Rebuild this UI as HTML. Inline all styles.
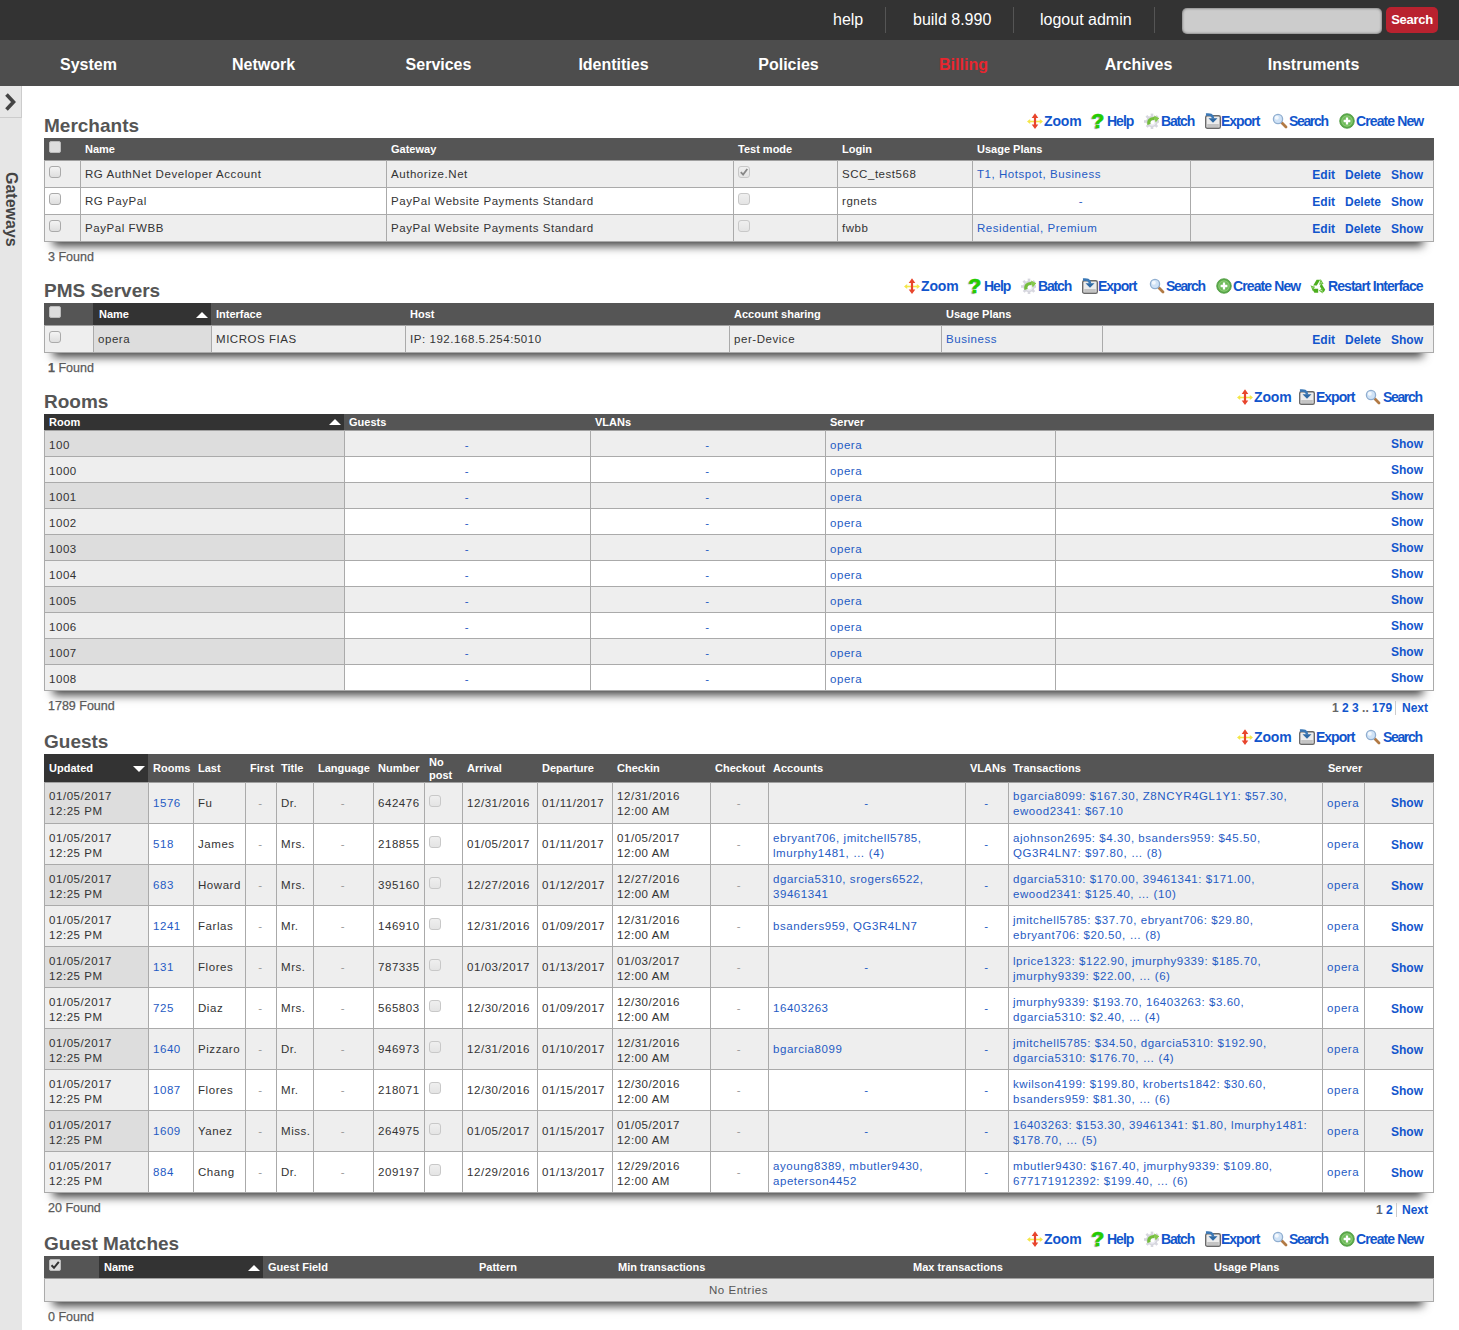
<!DOCTYPE html><html><head><meta charset="utf-8"><title>Billing</title><style>
*{box-sizing:border-box}
html,body{margin:0;padding:0}
body{width:1459px;height:1330px;overflow:hidden;position:relative;background:#fff;font-family:"Liberation Sans",sans-serif;color:#333}
.a{position:absolute}
.nw{white-space:nowrap}
#top{left:0;top:0;width:1459px;height:40px;background:#333}
#top .t{color:#fff;font-size:16px;top:10px;line-height:20px}
#top .sep{top:7px;width:1px;height:26px;background:#555}
#srch{left:1182px;top:8px;width:200px;height:26px;background:#ccc;border-radius:5px;box-shadow:inset 0 0 3px rgba(0,0,0,.6)}
#sbtn{left:1386px;top:7px;width:52px;height:26px;background:#b9222f;border-radius:5px;color:#fff;font-weight:bold;font-size:13px;line-height:26px;text-align:center;letter-spacing:-0.3px}
#nav{left:0;top:40px;width:1459px;height:46px;background:#4d4d4d}
#nav div{position:absolute;top:2px;width:175px;height:46px;line-height:46px;text-align:center;color:#fff;font-weight:bold;font-size:16px}
#side{left:0;top:86px;width:22px;height:1244px;background:#e6e6e6}
#chev{left:0;top:86px;width:22px;height:32px;border-right:1px solid #ccc;border-bottom:1px solid #ccc;background:#e6e6e6}
.h2{left:44px;font-size:19px;font-weight:bold;color:#555;line-height:22px;white-space:nowrap;margin-top:1px}
.tbt{color:#1155cc;font-weight:bold;font-size:14px;letter-spacing:-0.8px;line-height:16px;white-space:nowrap}
.a svg{display:block}
.helpq{width:16px;height:16px;font-size:21px;font-weight:bold;color:#22cc00;line-height:16px;text-align:center;-webkit-text-stroke:0.7px #22cc00;text-shadow:-1.5px 1px 1px rgba(0,0,0,.4)}
.tbl{left:44px;width:1390px}
.shd{position:absolute;left:51px;width:1374px;box-shadow:0 6px 9px -2px rgba(0,0,0,.75);background:#888}
.hd{position:absolute;top:0;left:0;width:1390px;background:#555}
.hc{position:absolute;color:#fff;font-weight:bold;font-size:11px;white-space:nowrap;line-height:13px}
.srt{background:#333}
.cell{position:absolute;overflow:hidden;font-size:11.5px;letter-spacing:0.55px;color:#333;white-space:nowrap;display:flex;align-items:center;line-height:15px;padding-top:0px}
.vl{position:absolute;width:1px;background:#aaa}
.hl{position:absolute;height:1px;background:#aaa;left:0;width:1390px}
.lk{color:#1f5bc4}
.gr{color:#999}
.act{color:#1155cc;font-weight:bold;font-size:12px;letter-spacing:0}
.found{left:48px;font-size:12.5px;color:#5a5a5a;line-height:14px;white-space:nowrap;-webkit-text-stroke:0.25px #5a5a5a}
.cb{position:absolute;width:12px;height:12px;border:1px solid #aaa;border-radius:3px;background:linear-gradient(#f4f4f4,#dedede)}
.dis{border-color:#c8c8c8;background:linear-gradient(#efefef,#e4e4e4)}
.cbh{position:absolute;width:12px;height:12px;border:1px solid #bbb;border-radius:2px;background:#ddd}
.tri{position:absolute;width:0;height:0;border-left:6px solid transparent;border-right:6px solid transparent}
.pg{position:absolute;font-size:12px;font-weight:bold;white-space:nowrap;line-height:14px;color:#1155cc}
</style></head><body>
<div id="top" class="a">
<div class="a t nw" style="left:833px">help</div>
<div class="a sep" style="left:885px"></div>
<div class="a t nw" style="left:913px">build 8.990</div>
<div class="a sep" style="left:1013px"></div>
<div class="a t nw" style="left:1040px">logout admin</div>
<div class="a sep" style="left:1154px"></div>
<div id="srch" class="a"></div>
<div id="sbtn" class="a">Search</div>
</div>
<div id="nav" class="a">
<div style="left:1px;color:#fff">System</div>
<div style="left:176px;color:#fff">Network</div>
<div style="left:351px;color:#fff">Services</div>
<div style="left:526px;color:#fff">Identities</div>
<div style="left:701px;color:#fff">Policies</div>
<div style="left:876px;color:#e8262f">Billing</div>
<div style="left:1051px;color:#fff">Archives</div>
<div style="left:1226px;color:#fff">Instruments</div>
</div>
<div id="side" class="a"></div>
<div id="chev" class="a"><svg class="a" style="left:4px;top:7px" width="14" height="18" viewBox="0 0 14 18"><path d="M2.5 1.5l7 7.5-7 7.5" stroke="#444" stroke-width="3.6" fill="none"/></svg></div>
<div class="a nw" style="left:-1px;top:172px;width:22px;height:76px;"><div style="position:absolute;left:22px;top:0;transform-origin:0 0;transform:rotate(90deg);font-size:16px;font-weight:bold;color:#444;line-height:20px">Gateways</div></div>
<div class="a h2" style="top:114px">Merchants</div>
<div class="a" style="left:1027px;top:113px;width:16px;height:16px"><svg width="16" height="16" viewBox="0 0 16 16"><path d="M1.5 8.5h13" stroke="#f4e64a" stroke-width="1.6"/><path d="M0 8.5l3.2-2.6v5.2z M16 8.5l-3.2-2.6v5.2z" fill="#f4e64a"/><path d="M8 4v9" stroke="#e8452c" stroke-width="2.2"/><path d="M8 0.3l-3.3 4.6h6.6z M8 16l-3.3-4.6h6.6z" fill="#e8452c"/></svg></div>
<div class="a tbt" style="left:1044px;top:113px;letter-spacing:-0.15px">Zoom</div>
<div class="a helpq" style="left:1090px;top:113px">?</div>
<div class="a tbt" style="left:1107px;top:113px;letter-spacing:-1.0px">Help</div>
<div class="a" style="left:1143px;top:113px;width:16px;height:16px"><svg width="16" height="16" viewBox="0 0 16 16"><g fill="#d6d6de"><circle cx="9" cy="8.5" r="5.8"/><rect x="7.7" y="0.6" width="2.6" height="15.4"/><rect x="1" y="7.2" width="16" height="2.6"/><rect x="7.7" y="0.6" width="2.6" height="15.4" transform="rotate(45 9 8.5)"/><rect x="7.7" y="0.6" width="2.6" height="15.4" transform="rotate(-45 9 8.5)"/></g><circle cx="9" cy="8.5" r="4.2" fill="#ececf2"/><circle cx="9.5" cy="9.5" r="1.8" fill="#fff"/><path d="M6 11.5C5 7.5 7.5 5 11.8 5.6" stroke="#74bd3c" stroke-width="3.2" fill="none"/><path d="M11 2.4L16.2 5.2 12.6 9.6z" fill="#86c94c"/></svg></div>
<div class="a tbt" style="left:1161px;top:113px;letter-spacing:-1.15px">Batch</div>
<div class="a" style="left:1205px;top:113px;width:16px;height:16px"><svg width="16" height="16" viewBox="0 0 16 16"><rect x="0.7" y="2.7" width="14.6" height="12.6" rx="1.6" fill="#ececec" stroke="#6a6a6a" stroke-width="1.4"/><rect x="2.2" y="11" width="11.6" height="3" fill="#c4c4c4"/><path d="M1 1.6C5 1.2 7.8 1.6 8 5.5" stroke="#3b78b6" stroke-width="2.6" fill="none"/><path d="M3.5 5.2h9l-4.5 4.6z" fill="#2f6aa6"/></svg></div>
<div class="a tbt" style="left:1221px;top:113px;letter-spacing:-1.0px">Export</div>
<div class="a" style="left:1272px;top:113px;width:16px;height:16px"><svg width="16" height="16" viewBox="0 0 16 16"><path d="M9.8 9.8l4.2 4.2" stroke="#b27a44" stroke-width="2.8" stroke-linecap="round"/><circle cx="6" cy="6" r="4.6" fill="#cfe2f6" stroke="#90aed0" stroke-width="1.3"/><circle cx="4.8" cy="4.8" r="2" fill="#fff" opacity=".75"/></svg></div>
<div class="a tbt" style="left:1289px;top:113px;letter-spacing:-1.35px">Search</div>
<div class="a" style="left:1339px;top:113px;width:16px;height:16px"><svg width="16" height="16" viewBox="0 0 16 16"><circle cx="8" cy="8" r="7.3" fill="#5aa84a" stroke="#4c9a3e" stroke-width=".8"/><circle cx="8" cy="8" r="5.8" fill="#8acb74"/><circle cx="8" cy="8" r="4.6" fill="#6dba58"/><path d="M8 4.6v6.8M4.6 8h6.8" stroke="#fff" stroke-width="2.3"/></svg></div>
<div class="a tbt" style="left:1356px;top:113px;letter-spacing:-0.9px">Create New</div>
<div class="shd" style="top:148px;height:94px"></div>
<div class="a tbl" style="top:138px;height:104px">
<div class="hd" style="height:22px"></div>
<div class="hc" style="left:41px;top:5px">Name</div>
<div class="hc" style="left:347px;top:5px">Gateway</div>
<div class="hc" style="left:694px;top:5px">Test mode</div>
<div class="hc" style="left:798px;top:5px">Login</div>
<div class="hc" style="left:933px;top:5px">Usage Plans</div>
<div class="cell" style="left:0px;top:22px;width:36px;height:27px;padding-top:2px;background:#eee;justify-content:flex-start;text-align:left;padding-left:5px;padding-right:3px;"></div>
<div class="cell" style="left:36px;top:22px;width:306px;height:27px;padding-top:2px;background:#eee;justify-content:flex-start;text-align:left;padding-left:5px;padding-right:3px;">RG AuthNet Developer Account</div>
<div class="cell" style="left:342px;top:22px;width:347px;height:27px;padding-top:2px;background:#eee;justify-content:flex-start;text-align:left;padding-left:5px;padding-right:3px;">Authorize.Net</div>
<div class="cell" style="left:689px;top:22px;width:104px;height:27px;padding-top:2px;background:#eee;justify-content:flex-start;text-align:left;padding-left:5px;padding-right:3px;"></div>
<div class="cell" style="left:793px;top:22px;width:135px;height:27px;padding-top:2px;background:#eee;justify-content:flex-start;text-align:left;padding-left:5px;padding-right:3px;">SCC_test568</div>
<div class="cell" style="left:928px;top:22px;width:218px;height:27px;padding-top:2px;background:#eee;justify-content:flex-start;text-align:left;padding-left:5px;padding-right:3px;"><span class="lk">T1, Hotspot, Business</span></div>
<div class="cell" style="left:1146px;top:22px;width:243px;height:27px;padding-top:4px;background:#eee;justify-content:flex-end;text-align:right;padding-right:10px;"><span class="act">Edit</span><span class="act" style="margin-left:10px">Delete</span><span class="act" style="margin-left:10px">Show</span></div>
<div class="hl" style="top:49px"></div>
<div class="cell" style="left:0px;top:50px;width:36px;height:26px;padding-top:0px;background:#fff;justify-content:flex-start;text-align:left;padding-left:5px;padding-right:3px;"></div>
<div class="cell" style="left:36px;top:50px;width:306px;height:26px;padding-top:0px;background:#fff;justify-content:flex-start;text-align:left;padding-left:5px;padding-right:3px;">RG PayPal</div>
<div class="cell" style="left:342px;top:50px;width:347px;height:26px;padding-top:0px;background:#fff;justify-content:flex-start;text-align:left;padding-left:5px;padding-right:3px;">PayPal Website Payments Standard</div>
<div class="cell" style="left:689px;top:50px;width:104px;height:26px;padding-top:0px;background:#fff;justify-content:flex-start;text-align:left;padding-left:5px;padding-right:3px;"></div>
<div class="cell" style="left:793px;top:50px;width:135px;height:26px;padding-top:0px;background:#fff;justify-content:flex-start;text-align:left;padding-left:5px;padding-right:3px;">rgnets</div>
<div class="cell" style="left:928px;top:50px;width:218px;height:26px;padding-top:0px;background:#fff;justify-content:center;text-align:center;;"><span class="lk">-</span></div>
<div class="cell" style="left:1146px;top:50px;width:243px;height:26px;padding-top:2px;background:#fff;justify-content:flex-end;text-align:right;padding-right:10px;"><span class="act">Edit</span><span class="act" style="margin-left:10px">Delete</span><span class="act" style="margin-left:10px">Show</span></div>
<div class="hl" style="top:76px"></div>
<div class="cell" style="left:0px;top:77px;width:36px;height:26px;padding-top:0px;background:#eee;justify-content:flex-start;text-align:left;padding-left:5px;padding-right:3px;"></div>
<div class="cell" style="left:36px;top:77px;width:306px;height:26px;padding-top:0px;background:#eee;justify-content:flex-start;text-align:left;padding-left:5px;padding-right:3px;">PayPal FWBB</div>
<div class="cell" style="left:342px;top:77px;width:347px;height:26px;padding-top:0px;background:#eee;justify-content:flex-start;text-align:left;padding-left:5px;padding-right:3px;">PayPal Website Payments Standard</div>
<div class="cell" style="left:689px;top:77px;width:104px;height:26px;padding-top:0px;background:#eee;justify-content:flex-start;text-align:left;padding-left:5px;padding-right:3px;"></div>
<div class="cell" style="left:793px;top:77px;width:135px;height:26px;padding-top:0px;background:#eee;justify-content:flex-start;text-align:left;padding-left:5px;padding-right:3px;">fwbb</div>
<div class="cell" style="left:928px;top:77px;width:218px;height:26px;padding-top:0px;background:#eee;justify-content:flex-start;text-align:left;padding-left:5px;padding-right:3px;"><span class="lk">Residential, Premium</span></div>
<div class="cell" style="left:1146px;top:77px;width:243px;height:26px;padding-top:2px;background:#eee;justify-content:flex-end;text-align:right;padding-right:10px;"><span class="act">Edit</span><span class="act" style="margin-left:10px">Delete</span><span class="act" style="margin-left:10px">Show</span></div>
<div class="hl" style="top:103px"></div>
<div class="hl" style="top:22px;background:#a0a0a0"></div>
<div class="vl" style="left:0px;top:22px;height:82px"></div>
<div class="vl" style="left:36px;top:22px;height:82px"></div>
<div class="vl" style="left:342px;top:22px;height:82px"></div>
<div class="vl" style="left:689px;top:22px;height:82px"></div>
<div class="vl" style="left:793px;top:22px;height:82px"></div>
<div class="vl" style="left:928px;top:22px;height:82px"></div>
<div class="vl" style="left:1146px;top:22px;height:82px"></div>
<div class="vl" style="left:1389px;top:22px;height:82px"></div>
</div>
<div class="cbh" style="left:49px;top:141px"></div>
<div class="cb" style="left:49px;top:166px"></div>
<div class="cb dis" style="left:738px;top:166px"></div>
<svg class="a" style="left:738px;top:166px" width="12" height="12" viewBox="0 0 12 12"><path d="M2.8 6.2l2.3 2.4 4.2-5.6" stroke="#888" stroke-width="1.8" fill="none"/></svg>
<div class="cb" style="left:49px;top:193px"></div>
<div class="cb dis" style="left:738px;top:193px"></div>
<div class="cb" style="left:49px;top:220px"></div>
<div class="cb dis" style="left:738px;top:220px"></div>
<div class="a found" style="top:250px">3 Found</div>
<div class="a h2" style="top:279px">PMS Servers</div>
<div class="a" style="left:904px;top:278px;width:16px;height:16px"><svg width="16" height="16" viewBox="0 0 16 16"><path d="M1.5 8.5h13" stroke="#f4e64a" stroke-width="1.6"/><path d="M0 8.5l3.2-2.6v5.2z M16 8.5l-3.2-2.6v5.2z" fill="#f4e64a"/><path d="M8 4v9" stroke="#e8452c" stroke-width="2.2"/><path d="M8 0.3l-3.3 4.6h6.6z M8 16l-3.3-4.6h6.6z" fill="#e8452c"/></svg></div>
<div class="a tbt" style="left:921px;top:278px;letter-spacing:-0.15px">Zoom</div>
<div class="a helpq" style="left:967px;top:278px">?</div>
<div class="a tbt" style="left:984px;top:278px;letter-spacing:-1.0px">Help</div>
<div class="a" style="left:1020px;top:278px;width:16px;height:16px"><svg width="16" height="16" viewBox="0 0 16 16"><g fill="#d6d6de"><circle cx="9" cy="8.5" r="5.8"/><rect x="7.7" y="0.6" width="2.6" height="15.4"/><rect x="1" y="7.2" width="16" height="2.6"/><rect x="7.7" y="0.6" width="2.6" height="15.4" transform="rotate(45 9 8.5)"/><rect x="7.7" y="0.6" width="2.6" height="15.4" transform="rotate(-45 9 8.5)"/></g><circle cx="9" cy="8.5" r="4.2" fill="#ececf2"/><circle cx="9.5" cy="9.5" r="1.8" fill="#fff"/><path d="M6 11.5C5 7.5 7.5 5 11.8 5.6" stroke="#74bd3c" stroke-width="3.2" fill="none"/><path d="M11 2.4L16.2 5.2 12.6 9.6z" fill="#86c94c"/></svg></div>
<div class="a tbt" style="left:1038px;top:278px;letter-spacing:-1.15px">Batch</div>
<div class="a" style="left:1082px;top:278px;width:16px;height:16px"><svg width="16" height="16" viewBox="0 0 16 16"><rect x="0.7" y="2.7" width="14.6" height="12.6" rx="1.6" fill="#ececec" stroke="#6a6a6a" stroke-width="1.4"/><rect x="2.2" y="11" width="11.6" height="3" fill="#c4c4c4"/><path d="M1 1.6C5 1.2 7.8 1.6 8 5.5" stroke="#3b78b6" stroke-width="2.6" fill="none"/><path d="M3.5 5.2h9l-4.5 4.6z" fill="#2f6aa6"/></svg></div>
<div class="a tbt" style="left:1098px;top:278px;letter-spacing:-1.0px">Export</div>
<div class="a" style="left:1149px;top:278px;width:16px;height:16px"><svg width="16" height="16" viewBox="0 0 16 16"><path d="M9.8 9.8l4.2 4.2" stroke="#b27a44" stroke-width="2.8" stroke-linecap="round"/><circle cx="6" cy="6" r="4.6" fill="#cfe2f6" stroke="#90aed0" stroke-width="1.3"/><circle cx="4.8" cy="4.8" r="2" fill="#fff" opacity=".75"/></svg></div>
<div class="a tbt" style="left:1166px;top:278px;letter-spacing:-1.35px">Search</div>
<div class="a" style="left:1216px;top:278px;width:16px;height:16px"><svg width="16" height="16" viewBox="0 0 16 16"><circle cx="8" cy="8" r="7.3" fill="#5aa84a" stroke="#4c9a3e" stroke-width=".8"/><circle cx="8" cy="8" r="5.8" fill="#8acb74"/><circle cx="8" cy="8" r="4.6" fill="#6dba58"/><path d="M8 4.6v6.8M4.6 8h6.8" stroke="#fff" stroke-width="2.3"/></svg></div>
<div class="a tbt" style="left:1233px;top:278px;letter-spacing:-0.9px">Create New</div>
<div class="a" style="left:1310px;top:278px;width:16px;height:16px"><svg width="16" height="16" viewBox="0 0 16 16"><g fill="#4cae1e"><path d="M3.2 7.6L6.6 1.8h3.6L6.8 7.6z"/><path d="M11.4 5.6l3.8 6.2-1.6 2.6-3.8-6.2z"/><path d="M2 10.8h6.2v4H4.4z"/></g><g fill="none" stroke="#6cc040" stroke-width="1.1"><path d="M10.8 2.4l1.9 3.2-2.8.4z"/><path d="M1.4 8.2l2.8.8-1.4 2.6z"/><path d="M9.6 12.6l2.6-1.6v3.4z"/></g></svg></div>
<div class="a tbt" style="left:1328px;top:278px;letter-spacing:-0.93px">Restart Interface</div>
<div class="shd" style="top:313px;height:40px"></div>
<div class="a tbl" style="top:303px;height:50px">
<div class="hd" style="height:22px"></div>
<div class="a srt" style="left:49px;top:0;width:118px;height:22px"></div>
<div class="hc" style="left:55px;top:5px">Name</div>
<div class="hc" style="left:172px;top:5px">Interface</div>
<div class="hc" style="left:366px;top:5px">Host</div>
<div class="hc" style="left:690px;top:5px">Account sharing</div>
<div class="hc" style="left:902px;top:5px">Usage Plans</div>
<div class="tri" style="left:152px;top:9px;border-bottom:6px solid #fff"></div>
<div class="cell" style="left:0px;top:22px;width:49px;height:27px;padding-top:2px;background:#eee;justify-content:flex-start;text-align:left;padding-left:5px;padding-right:3px;"></div>
<div class="cell" style="left:49px;top:22px;width:118px;height:27px;padding-top:2px;background:#ddd;justify-content:flex-start;text-align:left;padding-left:5px;padding-right:3px;">opera</div>
<div class="cell" style="left:167px;top:22px;width:194px;height:27px;padding-top:2px;background:#eee;justify-content:flex-start;text-align:left;padding-left:5px;padding-right:3px;">MICROS FIAS</div>
<div class="cell" style="left:361px;top:22px;width:324px;height:27px;padding-top:2px;background:#eee;justify-content:flex-start;text-align:left;padding-left:5px;padding-right:3px;">IP: 192.168.5.254:5010</div>
<div class="cell" style="left:685px;top:22px;width:212px;height:27px;padding-top:2px;background:#eee;justify-content:flex-start;text-align:left;padding-left:5px;padding-right:3px;">per-Device</div>
<div class="cell" style="left:897px;top:22px;width:161px;height:27px;padding-top:2px;background:#eee;justify-content:flex-start;text-align:left;padding-left:5px;padding-right:3px;"><span class="lk">Business</span></div>
<div class="cell" style="left:1058px;top:22px;width:331px;height:27px;padding-top:4px;background:#eee;justify-content:flex-end;text-align:right;padding-right:10px;"><span class="act">Edit</span><span class="act" style="margin-left:10px">Delete</span><span class="act" style="margin-left:10px">Show</span></div>
<div class="hl" style="top:49px"></div>
<div class="hl" style="top:22px;background:#a0a0a0"></div>
<div class="vl" style="left:0px;top:22px;height:28px"></div>
<div class="vl" style="left:49px;top:22px;height:28px"></div>
<div class="vl" style="left:167px;top:22px;height:28px"></div>
<div class="vl" style="left:361px;top:22px;height:28px"></div>
<div class="vl" style="left:685px;top:22px;height:28px"></div>
<div class="vl" style="left:897px;top:22px;height:28px"></div>
<div class="vl" style="left:1058px;top:22px;height:28px"></div>
<div class="vl" style="left:1389px;top:22px;height:28px"></div>
</div>
<div class="cbh" style="left:49px;top:306px"></div>
<div class="cb" style="left:49px;top:331px"></div>
<div class="a found" style="top:361px"><b>1</b> Found</div>
<div class="a h2" style="top:390px">Rooms</div>
<div class="a" style="left:1237px;top:389px;width:16px;height:16px"><svg width="16" height="16" viewBox="0 0 16 16"><path d="M1.5 8.5h13" stroke="#f4e64a" stroke-width="1.6"/><path d="M0 8.5l3.2-2.6v5.2z M16 8.5l-3.2-2.6v5.2z" fill="#f4e64a"/><path d="M8 4v9" stroke="#e8452c" stroke-width="2.2"/><path d="M8 0.3l-3.3 4.6h6.6z M8 16l-3.3-4.6h6.6z" fill="#e8452c"/></svg></div>
<div class="a tbt" style="left:1254px;top:389px;letter-spacing:-0.15px">Zoom</div>
<div class="a" style="left:1299px;top:389px;width:16px;height:16px"><svg width="16" height="16" viewBox="0 0 16 16"><rect x="0.7" y="2.7" width="14.6" height="12.6" rx="1.6" fill="#ececec" stroke="#6a6a6a" stroke-width="1.4"/><rect x="2.2" y="11" width="11.6" height="3" fill="#c4c4c4"/><path d="M1 1.6C5 1.2 7.8 1.6 8 5.5" stroke="#3b78b6" stroke-width="2.6" fill="none"/><path d="M3.5 5.2h9l-4.5 4.6z" fill="#2f6aa6"/></svg></div>
<div class="a tbt" style="left:1316px;top:389px;letter-spacing:-1.0px">Export</div>
<div class="a" style="left:1365px;top:389px;width:16px;height:16px"><svg width="16" height="16" viewBox="0 0 16 16"><path d="M9.8 9.8l4.2 4.2" stroke="#b27a44" stroke-width="2.8" stroke-linecap="round"/><circle cx="6" cy="6" r="4.6" fill="#cfe2f6" stroke="#90aed0" stroke-width="1.3"/><circle cx="4.8" cy="4.8" r="2" fill="#fff" opacity=".75"/></svg></div>
<div class="a tbt" style="left:1383px;top:389px;letter-spacing:-1.35px">Search</div>
<div class="shd" style="top:424px;height:267px"></div>
<div class="a tbl" style="top:414px;height:277px">
<div class="hd" style="height:16px"></div>
<div class="a srt" style="left:0px;top:0;width:300px;height:16px"></div>
<div class="hc" style="left:5px;top:2px">Room</div>
<div class="hc" style="left:305px;top:2px">Guests</div>
<div class="hc" style="left:551px;top:2px">VLANs</div>
<div class="hc" style="left:786px;top:2px">Server</div>
<div class="tri" style="left:285px;top:5px;border-bottom:6px solid #fff"></div>
<div class="cell" style="left:0px;top:16px;width:300px;height:26px;padding-top:5px;background:#ddd;justify-content:flex-start;text-align:left;padding-left:5px;padding-right:3px;">100</div>
<div class="cell" style="left:300px;top:16px;width:246px;height:26px;padding-top:5px;background:#eee;justify-content:center;text-align:center;;"><span class="lk">-</span></div>
<div class="cell" style="left:546px;top:16px;width:235px;height:26px;padding-top:5px;background:#eee;justify-content:center;text-align:center;;"><span class="lk">-</span></div>
<div class="cell" style="left:781px;top:16px;width:230px;height:26px;padding-top:5px;background:#eee;justify-content:flex-start;text-align:left;padding-left:5px;padding-right:3px;"><span class="lk">opera</span></div>
<div class="cell" style="left:1011px;top:16px;width:378px;height:26px;padding-top:3px;background:#eee;justify-content:flex-end;text-align:right;padding-right:10px;"><span class="act">Show</span></div>
<div class="hl" style="top:42px"></div>
<div class="cell" style="left:0px;top:43px;width:300px;height:25px;padding-top:3px;background:#eee;justify-content:flex-start;text-align:left;padding-left:5px;padding-right:3px;">1000</div>
<div class="cell" style="left:300px;top:43px;width:246px;height:25px;padding-top:3px;background:#fff;justify-content:center;text-align:center;;"><span class="lk">-</span></div>
<div class="cell" style="left:546px;top:43px;width:235px;height:25px;padding-top:3px;background:#fff;justify-content:center;text-align:center;;"><span class="lk">-</span></div>
<div class="cell" style="left:781px;top:43px;width:230px;height:25px;padding-top:3px;background:#fff;justify-content:flex-start;text-align:left;padding-left:5px;padding-right:3px;"><span class="lk">opera</span></div>
<div class="cell" style="left:1011px;top:43px;width:378px;height:25px;padding-top:1px;background:#fff;justify-content:flex-end;text-align:right;padding-right:10px;"><span class="act">Show</span></div>
<div class="hl" style="top:68px"></div>
<div class="cell" style="left:0px;top:69px;width:300px;height:25px;padding-top:3px;background:#ddd;justify-content:flex-start;text-align:left;padding-left:5px;padding-right:3px;">1001</div>
<div class="cell" style="left:300px;top:69px;width:246px;height:25px;padding-top:3px;background:#eee;justify-content:center;text-align:center;;"><span class="lk">-</span></div>
<div class="cell" style="left:546px;top:69px;width:235px;height:25px;padding-top:3px;background:#eee;justify-content:center;text-align:center;;"><span class="lk">-</span></div>
<div class="cell" style="left:781px;top:69px;width:230px;height:25px;padding-top:3px;background:#eee;justify-content:flex-start;text-align:left;padding-left:5px;padding-right:3px;"><span class="lk">opera</span></div>
<div class="cell" style="left:1011px;top:69px;width:378px;height:25px;padding-top:1px;background:#eee;justify-content:flex-end;text-align:right;padding-right:10px;"><span class="act">Show</span></div>
<div class="hl" style="top:94px"></div>
<div class="cell" style="left:0px;top:95px;width:300px;height:25px;padding-top:3px;background:#eee;justify-content:flex-start;text-align:left;padding-left:5px;padding-right:3px;">1002</div>
<div class="cell" style="left:300px;top:95px;width:246px;height:25px;padding-top:3px;background:#fff;justify-content:center;text-align:center;;"><span class="lk">-</span></div>
<div class="cell" style="left:546px;top:95px;width:235px;height:25px;padding-top:3px;background:#fff;justify-content:center;text-align:center;;"><span class="lk">-</span></div>
<div class="cell" style="left:781px;top:95px;width:230px;height:25px;padding-top:3px;background:#fff;justify-content:flex-start;text-align:left;padding-left:5px;padding-right:3px;"><span class="lk">opera</span></div>
<div class="cell" style="left:1011px;top:95px;width:378px;height:25px;padding-top:1px;background:#fff;justify-content:flex-end;text-align:right;padding-right:10px;"><span class="act">Show</span></div>
<div class="hl" style="top:120px"></div>
<div class="cell" style="left:0px;top:121px;width:300px;height:25px;padding-top:3px;background:#ddd;justify-content:flex-start;text-align:left;padding-left:5px;padding-right:3px;">1003</div>
<div class="cell" style="left:300px;top:121px;width:246px;height:25px;padding-top:3px;background:#eee;justify-content:center;text-align:center;;"><span class="lk">-</span></div>
<div class="cell" style="left:546px;top:121px;width:235px;height:25px;padding-top:3px;background:#eee;justify-content:center;text-align:center;;"><span class="lk">-</span></div>
<div class="cell" style="left:781px;top:121px;width:230px;height:25px;padding-top:3px;background:#eee;justify-content:flex-start;text-align:left;padding-left:5px;padding-right:3px;"><span class="lk">opera</span></div>
<div class="cell" style="left:1011px;top:121px;width:378px;height:25px;padding-top:1px;background:#eee;justify-content:flex-end;text-align:right;padding-right:10px;"><span class="act">Show</span></div>
<div class="hl" style="top:146px"></div>
<div class="cell" style="left:0px;top:147px;width:300px;height:25px;padding-top:3px;background:#eee;justify-content:flex-start;text-align:left;padding-left:5px;padding-right:3px;">1004</div>
<div class="cell" style="left:300px;top:147px;width:246px;height:25px;padding-top:3px;background:#fff;justify-content:center;text-align:center;;"><span class="lk">-</span></div>
<div class="cell" style="left:546px;top:147px;width:235px;height:25px;padding-top:3px;background:#fff;justify-content:center;text-align:center;;"><span class="lk">-</span></div>
<div class="cell" style="left:781px;top:147px;width:230px;height:25px;padding-top:3px;background:#fff;justify-content:flex-start;text-align:left;padding-left:5px;padding-right:3px;"><span class="lk">opera</span></div>
<div class="cell" style="left:1011px;top:147px;width:378px;height:25px;padding-top:1px;background:#fff;justify-content:flex-end;text-align:right;padding-right:10px;"><span class="act">Show</span></div>
<div class="hl" style="top:172px"></div>
<div class="cell" style="left:0px;top:173px;width:300px;height:25px;padding-top:3px;background:#ddd;justify-content:flex-start;text-align:left;padding-left:5px;padding-right:3px;">1005</div>
<div class="cell" style="left:300px;top:173px;width:246px;height:25px;padding-top:3px;background:#eee;justify-content:center;text-align:center;;"><span class="lk">-</span></div>
<div class="cell" style="left:546px;top:173px;width:235px;height:25px;padding-top:3px;background:#eee;justify-content:center;text-align:center;;"><span class="lk">-</span></div>
<div class="cell" style="left:781px;top:173px;width:230px;height:25px;padding-top:3px;background:#eee;justify-content:flex-start;text-align:left;padding-left:5px;padding-right:3px;"><span class="lk">opera</span></div>
<div class="cell" style="left:1011px;top:173px;width:378px;height:25px;padding-top:1px;background:#eee;justify-content:flex-end;text-align:right;padding-right:10px;"><span class="act">Show</span></div>
<div class="hl" style="top:198px"></div>
<div class="cell" style="left:0px;top:199px;width:300px;height:25px;padding-top:3px;background:#eee;justify-content:flex-start;text-align:left;padding-left:5px;padding-right:3px;">1006</div>
<div class="cell" style="left:300px;top:199px;width:246px;height:25px;padding-top:3px;background:#fff;justify-content:center;text-align:center;;"><span class="lk">-</span></div>
<div class="cell" style="left:546px;top:199px;width:235px;height:25px;padding-top:3px;background:#fff;justify-content:center;text-align:center;;"><span class="lk">-</span></div>
<div class="cell" style="left:781px;top:199px;width:230px;height:25px;padding-top:3px;background:#fff;justify-content:flex-start;text-align:left;padding-left:5px;padding-right:3px;"><span class="lk">opera</span></div>
<div class="cell" style="left:1011px;top:199px;width:378px;height:25px;padding-top:1px;background:#fff;justify-content:flex-end;text-align:right;padding-right:10px;"><span class="act">Show</span></div>
<div class="hl" style="top:224px"></div>
<div class="cell" style="left:0px;top:225px;width:300px;height:25px;padding-top:3px;background:#ddd;justify-content:flex-start;text-align:left;padding-left:5px;padding-right:3px;">1007</div>
<div class="cell" style="left:300px;top:225px;width:246px;height:25px;padding-top:3px;background:#eee;justify-content:center;text-align:center;;"><span class="lk">-</span></div>
<div class="cell" style="left:546px;top:225px;width:235px;height:25px;padding-top:3px;background:#eee;justify-content:center;text-align:center;;"><span class="lk">-</span></div>
<div class="cell" style="left:781px;top:225px;width:230px;height:25px;padding-top:3px;background:#eee;justify-content:flex-start;text-align:left;padding-left:5px;padding-right:3px;"><span class="lk">opera</span></div>
<div class="cell" style="left:1011px;top:225px;width:378px;height:25px;padding-top:1px;background:#eee;justify-content:flex-end;text-align:right;padding-right:10px;"><span class="act">Show</span></div>
<div class="hl" style="top:250px"></div>
<div class="cell" style="left:0px;top:251px;width:300px;height:25px;padding-top:3px;background:#eee;justify-content:flex-start;text-align:left;padding-left:5px;padding-right:3px;">1008</div>
<div class="cell" style="left:300px;top:251px;width:246px;height:25px;padding-top:3px;background:#fff;justify-content:center;text-align:center;;"><span class="lk">-</span></div>
<div class="cell" style="left:546px;top:251px;width:235px;height:25px;padding-top:3px;background:#fff;justify-content:center;text-align:center;;"><span class="lk">-</span></div>
<div class="cell" style="left:781px;top:251px;width:230px;height:25px;padding-top:3px;background:#fff;justify-content:flex-start;text-align:left;padding-left:5px;padding-right:3px;"><span class="lk">opera</span></div>
<div class="cell" style="left:1011px;top:251px;width:378px;height:25px;padding-top:1px;background:#fff;justify-content:flex-end;text-align:right;padding-right:10px;"><span class="act">Show</span></div>
<div class="hl" style="top:276px"></div>
<div class="hl" style="top:16px;background:#a0a0a0"></div>
<div class="vl" style="left:0px;top:16px;height:261px"></div>
<div class="vl" style="left:300px;top:16px;height:261px"></div>
<div class="vl" style="left:546px;top:16px;height:261px"></div>
<div class="vl" style="left:781px;top:16px;height:261px"></div>
<div class="vl" style="left:1011px;top:16px;height:261px"></div>
<div class="vl" style="left:1389px;top:16px;height:261px"></div>
</div>
<div class="a found" style="top:699px">1789 Found</div>
<div class="pg" style="left:1332px;top:701px"><span style="color:#666">1</span> 2 3 <span style="color:#666">..</span> 179</div>
<div class="a" style="left:1395px;top:701px;width:1px;height:14px;background:#ccc"></div>
<div class="pg" style="left:1402px;top:701px">Next</div>
<div class="a h2" style="top:730px">Guests</div>
<div class="a" style="left:1237px;top:729px;width:16px;height:16px"><svg width="16" height="16" viewBox="0 0 16 16"><path d="M1.5 8.5h13" stroke="#f4e64a" stroke-width="1.6"/><path d="M0 8.5l3.2-2.6v5.2z M16 8.5l-3.2-2.6v5.2z" fill="#f4e64a"/><path d="M8 4v9" stroke="#e8452c" stroke-width="2.2"/><path d="M8 0.3l-3.3 4.6h6.6z M8 16l-3.3-4.6h6.6z" fill="#e8452c"/></svg></div>
<div class="a tbt" style="left:1254px;top:729px;letter-spacing:-0.15px">Zoom</div>
<div class="a" style="left:1299px;top:729px;width:16px;height:16px"><svg width="16" height="16" viewBox="0 0 16 16"><rect x="0.7" y="2.7" width="14.6" height="12.6" rx="1.6" fill="#ececec" stroke="#6a6a6a" stroke-width="1.4"/><rect x="2.2" y="11" width="11.6" height="3" fill="#c4c4c4"/><path d="M1 1.6C5 1.2 7.8 1.6 8 5.5" stroke="#3b78b6" stroke-width="2.6" fill="none"/><path d="M3.5 5.2h9l-4.5 4.6z" fill="#2f6aa6"/></svg></div>
<div class="a tbt" style="left:1316px;top:729px;letter-spacing:-1.0px">Export</div>
<div class="a" style="left:1365px;top:729px;width:16px;height:16px"><svg width="16" height="16" viewBox="0 0 16 16"><path d="M9.8 9.8l4.2 4.2" stroke="#b27a44" stroke-width="2.8" stroke-linecap="round"/><circle cx="6" cy="6" r="4.6" fill="#cfe2f6" stroke="#90aed0" stroke-width="1.3"/><circle cx="4.8" cy="4.8" r="2" fill="#fff" opacity=".75"/></svg></div>
<div class="a tbt" style="left:1383px;top:729px;letter-spacing:-1.35px">Search</div>
<div class="shd" style="top:764px;height:429px"></div>
<div class="a tbl" style="top:754px;height:439px">
<div class="hd" style="height:28px"></div>
<div class="a srt" style="left:0px;top:0;width:104px;height:28px"></div>
<div class="hc" style="left:5px;top:8px">Updated</div>
<div class="hc" style="left:109px;top:8px">Rooms</div>
<div class="hc" style="left:154px;top:8px">Last</div>
<div class="hc" style="left:206px;top:8px">First</div>
<div class="hc" style="left:237px;top:8px">Title</div>
<div class="hc" style="left:274px;top:8px">Language</div>
<div class="hc" style="left:334px;top:8px">Number</div>
<div class="hc" style="left:385px;top:2px">No<br>post</div>
<div class="hc" style="left:423px;top:8px">Arrival</div>
<div class="hc" style="left:498px;top:8px">Departure</div>
<div class="hc" style="left:573px;top:8px">Checkin</div>
<div class="hc" style="left:671px;top:8px">Checkout</div>
<div class="hc" style="left:729px;top:8px">Accounts</div>
<div class="hc" style="left:926px;top:8px">VLANs</div>
<div class="hc" style="left:969px;top:8px">Transactions</div>
<div class="hc" style="left:1284px;top:8px">Server</div>
<div class="tri" style="left:89px;top:12px;border-top:6px solid #fff"></div>
<div class="cell" style="left:0px;top:28px;width:104px;height:41px;padding-top:3px;background:#ddd;justify-content:flex-start;text-align:left;padding-left:5px;padding-right:3px;">01/05/2017<br>12:25 PM</div>
<div class="cell" style="left:104px;top:28px;width:45px;height:41px;padding-top:1px;background:#eee;justify-content:flex-start;text-align:left;padding-left:5px;padding-right:3px;"><span class="lk">1576</span></div>
<div class="cell" style="left:149px;top:28px;width:52px;height:41px;padding-top:1px;background:#eee;justify-content:flex-start;text-align:left;padding-left:5px;padding-right:3px;">Fu</div>
<div class="cell" style="left:201px;top:28px;width:31px;height:41px;padding-top:1px;background:#eee;justify-content:center;text-align:center;;"><span class="gr">-</span></div>
<div class="cell" style="left:232px;top:28px;width:37px;height:41px;padding-top:1px;background:#eee;justify-content:flex-start;text-align:left;padding-left:5px;padding-right:3px;">Dr.</div>
<div class="cell" style="left:269px;top:28px;width:60px;height:41px;padding-top:1px;background:#eee;justify-content:center;text-align:center;;"><span class="gr">-</span></div>
<div class="cell" style="left:329px;top:28px;width:51px;height:41px;padding-top:1px;background:#eee;justify-content:flex-start;text-align:left;padding-left:5px;padding-right:3px;">642476</div>
<div class="cell" style="left:380px;top:28px;width:38px;height:41px;padding-top:3px;background:#eee;justify-content:flex-start;text-align:left;padding-left:5px;padding-right:3px;"></div>
<div class="cell" style="left:418px;top:28px;width:75px;height:41px;padding-top:1px;background:#eee;justify-content:flex-start;text-align:left;padding-left:5px;padding-right:3px;">12/31/2016</div>
<div class="cell" style="left:493px;top:28px;width:75px;height:41px;padding-top:1px;background:#eee;justify-content:flex-start;text-align:left;padding-left:5px;padding-right:3px;">01/11/2017</div>
<div class="cell" style="left:568px;top:28px;width:98px;height:41px;padding-top:3px;background:#eee;justify-content:flex-start;text-align:left;padding-left:5px;padding-right:3px;">12/31/2016<br>12:00 AM</div>
<div class="cell" style="left:666px;top:28px;width:58px;height:41px;padding-top:1px;background:#eee;justify-content:center;text-align:center;;"><span class="gr">-</span></div>
<div class="cell" style="left:724px;top:28px;width:197px;height:41px;padding-top:1px;background:#eee;justify-content:center;text-align:center;;"><span class="lk">-</span></div>
<div class="cell" style="left:921px;top:28px;width:43px;height:41px;padding-top:1px;background:#eee;justify-content:center;text-align:center;;"><span class="lk">-</span></div>
<div class="cell" style="left:964px;top:28px;width:314px;height:41px;padding-top:3px;background:#eee;justify-content:flex-start;text-align:left;padding-left:5px;padding-right:3px;"><span class="lk">bgarcia8099: $167.30, Z8NCYR4GL1Y1: $57.30,<br>ewood2341: $67.10</span></div>
<div class="cell" style="left:1278px;top:28px;width:42px;height:41px;padding-top:1px;background:#eee;justify-content:flex-start;text-align:left;padding-left:5px;padding-right:3px;"><span class="lk">opera</span></div>
<div class="cell" style="left:1320px;top:28px;width:69px;height:41px;padding-top:2px;background:#eee;justify-content:flex-end;text-align:right;padding-right:10px;"><span class="act">Show</span></div>
<div class="hl" style="top:69px"></div>
<div class="cell" style="left:0px;top:70px;width:104px;height:40px;padding-top:3px;background:#eee;justify-content:flex-start;text-align:left;padding-left:5px;padding-right:3px;">01/05/2017<br>12:25 PM</div>
<div class="cell" style="left:104px;top:70px;width:45px;height:40px;padding-top:1px;background:#fff;justify-content:flex-start;text-align:left;padding-left:5px;padding-right:3px;"><span class="lk">518</span></div>
<div class="cell" style="left:149px;top:70px;width:52px;height:40px;padding-top:1px;background:#fff;justify-content:flex-start;text-align:left;padding-left:5px;padding-right:3px;">James</div>
<div class="cell" style="left:201px;top:70px;width:31px;height:40px;padding-top:1px;background:#fff;justify-content:center;text-align:center;;"><span class="gr">-</span></div>
<div class="cell" style="left:232px;top:70px;width:37px;height:40px;padding-top:1px;background:#fff;justify-content:flex-start;text-align:left;padding-left:5px;padding-right:3px;">Mrs.</div>
<div class="cell" style="left:269px;top:70px;width:60px;height:40px;padding-top:1px;background:#fff;justify-content:center;text-align:center;;"><span class="gr">-</span></div>
<div class="cell" style="left:329px;top:70px;width:51px;height:40px;padding-top:1px;background:#fff;justify-content:flex-start;text-align:left;padding-left:5px;padding-right:3px;">218855</div>
<div class="cell" style="left:380px;top:70px;width:38px;height:40px;padding-top:3px;background:#fff;justify-content:flex-start;text-align:left;padding-left:5px;padding-right:3px;"></div>
<div class="cell" style="left:418px;top:70px;width:75px;height:40px;padding-top:1px;background:#fff;justify-content:flex-start;text-align:left;padding-left:5px;padding-right:3px;">01/05/2017</div>
<div class="cell" style="left:493px;top:70px;width:75px;height:40px;padding-top:1px;background:#fff;justify-content:flex-start;text-align:left;padding-left:5px;padding-right:3px;">01/11/2017</div>
<div class="cell" style="left:568px;top:70px;width:98px;height:40px;padding-top:3px;background:#fff;justify-content:flex-start;text-align:left;padding-left:5px;padding-right:3px;">01/05/2017<br>12:00 AM</div>
<div class="cell" style="left:666px;top:70px;width:58px;height:40px;padding-top:1px;background:#fff;justify-content:center;text-align:center;;"><span class="gr">-</span></div>
<div class="cell" style="left:724px;top:70px;width:197px;height:40px;padding-top:3px;background:#fff;justify-content:flex-start;text-align:left;padding-left:5px;padding-right:3px;"><span class="lk">ebryant706, jmitchell5785,<br>lmurphy1481, … (4)</span></div>
<div class="cell" style="left:921px;top:70px;width:43px;height:40px;padding-top:1px;background:#fff;justify-content:center;text-align:center;;"><span class="lk">-</span></div>
<div class="cell" style="left:964px;top:70px;width:314px;height:40px;padding-top:3px;background:#fff;justify-content:flex-start;text-align:left;padding-left:5px;padding-right:3px;"><span class="lk">ajohnson2695: $4.30, bsanders959: $45.50,<br>QG3R4LN7: $97.80, … (8)</span></div>
<div class="cell" style="left:1278px;top:70px;width:42px;height:40px;padding-top:1px;background:#fff;justify-content:flex-start;text-align:left;padding-left:5px;padding-right:3px;"><span class="lk">opera</span></div>
<div class="cell" style="left:1320px;top:70px;width:69px;height:40px;padding-top:2px;background:#fff;justify-content:flex-end;text-align:right;padding-right:10px;"><span class="act">Show</span></div>
<div class="hl" style="top:110px"></div>
<div class="cell" style="left:0px;top:111px;width:104px;height:40px;padding-top:3px;background:#ddd;justify-content:flex-start;text-align:left;padding-left:5px;padding-right:3px;">01/05/2017<br>12:25 PM</div>
<div class="cell" style="left:104px;top:111px;width:45px;height:40px;padding-top:1px;background:#eee;justify-content:flex-start;text-align:left;padding-left:5px;padding-right:3px;"><span class="lk">683</span></div>
<div class="cell" style="left:149px;top:111px;width:52px;height:40px;padding-top:1px;background:#eee;justify-content:flex-start;text-align:left;padding-left:5px;padding-right:3px;">Howard</div>
<div class="cell" style="left:201px;top:111px;width:31px;height:40px;padding-top:1px;background:#eee;justify-content:center;text-align:center;;"><span class="gr">-</span></div>
<div class="cell" style="left:232px;top:111px;width:37px;height:40px;padding-top:1px;background:#eee;justify-content:flex-start;text-align:left;padding-left:5px;padding-right:3px;">Mrs.</div>
<div class="cell" style="left:269px;top:111px;width:60px;height:40px;padding-top:1px;background:#eee;justify-content:center;text-align:center;;"><span class="gr">-</span></div>
<div class="cell" style="left:329px;top:111px;width:51px;height:40px;padding-top:1px;background:#eee;justify-content:flex-start;text-align:left;padding-left:5px;padding-right:3px;">395160</div>
<div class="cell" style="left:380px;top:111px;width:38px;height:40px;padding-top:3px;background:#eee;justify-content:flex-start;text-align:left;padding-left:5px;padding-right:3px;"></div>
<div class="cell" style="left:418px;top:111px;width:75px;height:40px;padding-top:1px;background:#eee;justify-content:flex-start;text-align:left;padding-left:5px;padding-right:3px;">12/27/2016</div>
<div class="cell" style="left:493px;top:111px;width:75px;height:40px;padding-top:1px;background:#eee;justify-content:flex-start;text-align:left;padding-left:5px;padding-right:3px;">01/12/2017</div>
<div class="cell" style="left:568px;top:111px;width:98px;height:40px;padding-top:3px;background:#eee;justify-content:flex-start;text-align:left;padding-left:5px;padding-right:3px;">12/27/2016<br>12:00 AM</div>
<div class="cell" style="left:666px;top:111px;width:58px;height:40px;padding-top:1px;background:#eee;justify-content:center;text-align:center;;"><span class="gr">-</span></div>
<div class="cell" style="left:724px;top:111px;width:197px;height:40px;padding-top:3px;background:#eee;justify-content:flex-start;text-align:left;padding-left:5px;padding-right:3px;"><span class="lk">dgarcia5310, srogers6522,<br>39461341</span></div>
<div class="cell" style="left:921px;top:111px;width:43px;height:40px;padding-top:1px;background:#eee;justify-content:center;text-align:center;;"><span class="lk">-</span></div>
<div class="cell" style="left:964px;top:111px;width:314px;height:40px;padding-top:3px;background:#eee;justify-content:flex-start;text-align:left;padding-left:5px;padding-right:3px;"><span class="lk">dgarcia5310: $170.00, 39461341: $171.00,<br>ewood2341: $125.40, … (10)</span></div>
<div class="cell" style="left:1278px;top:111px;width:42px;height:40px;padding-top:1px;background:#eee;justify-content:flex-start;text-align:left;padding-left:5px;padding-right:3px;"><span class="lk">opera</span></div>
<div class="cell" style="left:1320px;top:111px;width:69px;height:40px;padding-top:2px;background:#eee;justify-content:flex-end;text-align:right;padding-right:10px;"><span class="act">Show</span></div>
<div class="hl" style="top:151px"></div>
<div class="cell" style="left:0px;top:152px;width:104px;height:40px;padding-top:3px;background:#eee;justify-content:flex-start;text-align:left;padding-left:5px;padding-right:3px;">01/05/2017<br>12:25 PM</div>
<div class="cell" style="left:104px;top:152px;width:45px;height:40px;padding-top:1px;background:#fff;justify-content:flex-start;text-align:left;padding-left:5px;padding-right:3px;"><span class="lk">1241</span></div>
<div class="cell" style="left:149px;top:152px;width:52px;height:40px;padding-top:1px;background:#fff;justify-content:flex-start;text-align:left;padding-left:5px;padding-right:3px;">Farlas</div>
<div class="cell" style="left:201px;top:152px;width:31px;height:40px;padding-top:1px;background:#fff;justify-content:center;text-align:center;;"><span class="gr">-</span></div>
<div class="cell" style="left:232px;top:152px;width:37px;height:40px;padding-top:1px;background:#fff;justify-content:flex-start;text-align:left;padding-left:5px;padding-right:3px;">Mr.</div>
<div class="cell" style="left:269px;top:152px;width:60px;height:40px;padding-top:1px;background:#fff;justify-content:center;text-align:center;;"><span class="gr">-</span></div>
<div class="cell" style="left:329px;top:152px;width:51px;height:40px;padding-top:1px;background:#fff;justify-content:flex-start;text-align:left;padding-left:5px;padding-right:3px;">146910</div>
<div class="cell" style="left:380px;top:152px;width:38px;height:40px;padding-top:3px;background:#fff;justify-content:flex-start;text-align:left;padding-left:5px;padding-right:3px;"></div>
<div class="cell" style="left:418px;top:152px;width:75px;height:40px;padding-top:1px;background:#fff;justify-content:flex-start;text-align:left;padding-left:5px;padding-right:3px;">12/31/2016</div>
<div class="cell" style="left:493px;top:152px;width:75px;height:40px;padding-top:1px;background:#fff;justify-content:flex-start;text-align:left;padding-left:5px;padding-right:3px;">01/09/2017</div>
<div class="cell" style="left:568px;top:152px;width:98px;height:40px;padding-top:3px;background:#fff;justify-content:flex-start;text-align:left;padding-left:5px;padding-right:3px;">12/31/2016<br>12:00 AM</div>
<div class="cell" style="left:666px;top:152px;width:58px;height:40px;padding-top:1px;background:#fff;justify-content:center;text-align:center;;"><span class="gr">-</span></div>
<div class="cell" style="left:724px;top:152px;width:197px;height:40px;padding-top:1px;background:#fff;justify-content:flex-start;text-align:left;padding-left:5px;padding-right:3px;"><span class="lk">bsanders959, QG3R4LN7</span></div>
<div class="cell" style="left:921px;top:152px;width:43px;height:40px;padding-top:1px;background:#fff;justify-content:center;text-align:center;;"><span class="lk">-</span></div>
<div class="cell" style="left:964px;top:152px;width:314px;height:40px;padding-top:3px;background:#fff;justify-content:flex-start;text-align:left;padding-left:5px;padding-right:3px;"><span class="lk">jmitchell5785: $37.70, ebryant706: $29.80,<br>ebryant706: $20.50, … (8)</span></div>
<div class="cell" style="left:1278px;top:152px;width:42px;height:40px;padding-top:1px;background:#fff;justify-content:flex-start;text-align:left;padding-left:5px;padding-right:3px;"><span class="lk">opera</span></div>
<div class="cell" style="left:1320px;top:152px;width:69px;height:40px;padding-top:2px;background:#fff;justify-content:flex-end;text-align:right;padding-right:10px;"><span class="act">Show</span></div>
<div class="hl" style="top:192px"></div>
<div class="cell" style="left:0px;top:193px;width:104px;height:40px;padding-top:3px;background:#ddd;justify-content:flex-start;text-align:left;padding-left:5px;padding-right:3px;">01/05/2017<br>12:25 PM</div>
<div class="cell" style="left:104px;top:193px;width:45px;height:40px;padding-top:1px;background:#eee;justify-content:flex-start;text-align:left;padding-left:5px;padding-right:3px;"><span class="lk">131</span></div>
<div class="cell" style="left:149px;top:193px;width:52px;height:40px;padding-top:1px;background:#eee;justify-content:flex-start;text-align:left;padding-left:5px;padding-right:3px;">Flores</div>
<div class="cell" style="left:201px;top:193px;width:31px;height:40px;padding-top:1px;background:#eee;justify-content:center;text-align:center;;"><span class="gr">-</span></div>
<div class="cell" style="left:232px;top:193px;width:37px;height:40px;padding-top:1px;background:#eee;justify-content:flex-start;text-align:left;padding-left:5px;padding-right:3px;">Mrs.</div>
<div class="cell" style="left:269px;top:193px;width:60px;height:40px;padding-top:1px;background:#eee;justify-content:center;text-align:center;;"><span class="gr">-</span></div>
<div class="cell" style="left:329px;top:193px;width:51px;height:40px;padding-top:1px;background:#eee;justify-content:flex-start;text-align:left;padding-left:5px;padding-right:3px;">787335</div>
<div class="cell" style="left:380px;top:193px;width:38px;height:40px;padding-top:3px;background:#eee;justify-content:flex-start;text-align:left;padding-left:5px;padding-right:3px;"></div>
<div class="cell" style="left:418px;top:193px;width:75px;height:40px;padding-top:1px;background:#eee;justify-content:flex-start;text-align:left;padding-left:5px;padding-right:3px;">01/03/2017</div>
<div class="cell" style="left:493px;top:193px;width:75px;height:40px;padding-top:1px;background:#eee;justify-content:flex-start;text-align:left;padding-left:5px;padding-right:3px;">01/13/2017</div>
<div class="cell" style="left:568px;top:193px;width:98px;height:40px;padding-top:3px;background:#eee;justify-content:flex-start;text-align:left;padding-left:5px;padding-right:3px;">01/03/2017<br>12:00 AM</div>
<div class="cell" style="left:666px;top:193px;width:58px;height:40px;padding-top:1px;background:#eee;justify-content:center;text-align:center;;"><span class="gr">-</span></div>
<div class="cell" style="left:724px;top:193px;width:197px;height:40px;padding-top:1px;background:#eee;justify-content:center;text-align:center;;"><span class="lk">-</span></div>
<div class="cell" style="left:921px;top:193px;width:43px;height:40px;padding-top:1px;background:#eee;justify-content:center;text-align:center;;"><span class="lk">-</span></div>
<div class="cell" style="left:964px;top:193px;width:314px;height:40px;padding-top:3px;background:#eee;justify-content:flex-start;text-align:left;padding-left:5px;padding-right:3px;"><span class="lk">lprice1323: $122.90, jmurphy9339: $185.70,<br>jmurphy9339: $22.00, … (6)</span></div>
<div class="cell" style="left:1278px;top:193px;width:42px;height:40px;padding-top:1px;background:#eee;justify-content:flex-start;text-align:left;padding-left:5px;padding-right:3px;"><span class="lk">opera</span></div>
<div class="cell" style="left:1320px;top:193px;width:69px;height:40px;padding-top:2px;background:#eee;justify-content:flex-end;text-align:right;padding-right:10px;"><span class="act">Show</span></div>
<div class="hl" style="top:233px"></div>
<div class="cell" style="left:0px;top:234px;width:104px;height:40px;padding-top:3px;background:#eee;justify-content:flex-start;text-align:left;padding-left:5px;padding-right:3px;">01/05/2017<br>12:25 PM</div>
<div class="cell" style="left:104px;top:234px;width:45px;height:40px;padding-top:1px;background:#fff;justify-content:flex-start;text-align:left;padding-left:5px;padding-right:3px;"><span class="lk">725</span></div>
<div class="cell" style="left:149px;top:234px;width:52px;height:40px;padding-top:1px;background:#fff;justify-content:flex-start;text-align:left;padding-left:5px;padding-right:3px;">Diaz</div>
<div class="cell" style="left:201px;top:234px;width:31px;height:40px;padding-top:1px;background:#fff;justify-content:center;text-align:center;;"><span class="gr">-</span></div>
<div class="cell" style="left:232px;top:234px;width:37px;height:40px;padding-top:1px;background:#fff;justify-content:flex-start;text-align:left;padding-left:5px;padding-right:3px;">Mrs.</div>
<div class="cell" style="left:269px;top:234px;width:60px;height:40px;padding-top:1px;background:#fff;justify-content:center;text-align:center;;"><span class="gr">-</span></div>
<div class="cell" style="left:329px;top:234px;width:51px;height:40px;padding-top:1px;background:#fff;justify-content:flex-start;text-align:left;padding-left:5px;padding-right:3px;">565803</div>
<div class="cell" style="left:380px;top:234px;width:38px;height:40px;padding-top:3px;background:#fff;justify-content:flex-start;text-align:left;padding-left:5px;padding-right:3px;"></div>
<div class="cell" style="left:418px;top:234px;width:75px;height:40px;padding-top:1px;background:#fff;justify-content:flex-start;text-align:left;padding-left:5px;padding-right:3px;">12/30/2016</div>
<div class="cell" style="left:493px;top:234px;width:75px;height:40px;padding-top:1px;background:#fff;justify-content:flex-start;text-align:left;padding-left:5px;padding-right:3px;">01/09/2017</div>
<div class="cell" style="left:568px;top:234px;width:98px;height:40px;padding-top:3px;background:#fff;justify-content:flex-start;text-align:left;padding-left:5px;padding-right:3px;">12/30/2016<br>12:00 AM</div>
<div class="cell" style="left:666px;top:234px;width:58px;height:40px;padding-top:1px;background:#fff;justify-content:center;text-align:center;;"><span class="gr">-</span></div>
<div class="cell" style="left:724px;top:234px;width:197px;height:40px;padding-top:1px;background:#fff;justify-content:flex-start;text-align:left;padding-left:5px;padding-right:3px;"><span class="lk">16403263</span></div>
<div class="cell" style="left:921px;top:234px;width:43px;height:40px;padding-top:1px;background:#fff;justify-content:center;text-align:center;;"><span class="lk">-</span></div>
<div class="cell" style="left:964px;top:234px;width:314px;height:40px;padding-top:3px;background:#fff;justify-content:flex-start;text-align:left;padding-left:5px;padding-right:3px;"><span class="lk">jmurphy9339: $193.70, 16403263: $3.60,<br>dgarcia5310: $2.40, … (4)</span></div>
<div class="cell" style="left:1278px;top:234px;width:42px;height:40px;padding-top:1px;background:#fff;justify-content:flex-start;text-align:left;padding-left:5px;padding-right:3px;"><span class="lk">opera</span></div>
<div class="cell" style="left:1320px;top:234px;width:69px;height:40px;padding-top:2px;background:#fff;justify-content:flex-end;text-align:right;padding-right:10px;"><span class="act">Show</span></div>
<div class="hl" style="top:274px"></div>
<div class="cell" style="left:0px;top:275px;width:104px;height:40px;padding-top:3px;background:#ddd;justify-content:flex-start;text-align:left;padding-left:5px;padding-right:3px;">01/05/2017<br>12:25 PM</div>
<div class="cell" style="left:104px;top:275px;width:45px;height:40px;padding-top:1px;background:#eee;justify-content:flex-start;text-align:left;padding-left:5px;padding-right:3px;"><span class="lk">1640</span></div>
<div class="cell" style="left:149px;top:275px;width:52px;height:40px;padding-top:1px;background:#eee;justify-content:flex-start;text-align:left;padding-left:5px;padding-right:3px;">Pizzaro</div>
<div class="cell" style="left:201px;top:275px;width:31px;height:40px;padding-top:1px;background:#eee;justify-content:center;text-align:center;;"><span class="gr">-</span></div>
<div class="cell" style="left:232px;top:275px;width:37px;height:40px;padding-top:1px;background:#eee;justify-content:flex-start;text-align:left;padding-left:5px;padding-right:3px;">Dr.</div>
<div class="cell" style="left:269px;top:275px;width:60px;height:40px;padding-top:1px;background:#eee;justify-content:center;text-align:center;;"><span class="gr">-</span></div>
<div class="cell" style="left:329px;top:275px;width:51px;height:40px;padding-top:1px;background:#eee;justify-content:flex-start;text-align:left;padding-left:5px;padding-right:3px;">946973</div>
<div class="cell" style="left:380px;top:275px;width:38px;height:40px;padding-top:3px;background:#eee;justify-content:flex-start;text-align:left;padding-left:5px;padding-right:3px;"></div>
<div class="cell" style="left:418px;top:275px;width:75px;height:40px;padding-top:1px;background:#eee;justify-content:flex-start;text-align:left;padding-left:5px;padding-right:3px;">12/31/2016</div>
<div class="cell" style="left:493px;top:275px;width:75px;height:40px;padding-top:1px;background:#eee;justify-content:flex-start;text-align:left;padding-left:5px;padding-right:3px;">01/10/2017</div>
<div class="cell" style="left:568px;top:275px;width:98px;height:40px;padding-top:3px;background:#eee;justify-content:flex-start;text-align:left;padding-left:5px;padding-right:3px;">12/31/2016<br>12:00 AM</div>
<div class="cell" style="left:666px;top:275px;width:58px;height:40px;padding-top:1px;background:#eee;justify-content:center;text-align:center;;"><span class="gr">-</span></div>
<div class="cell" style="left:724px;top:275px;width:197px;height:40px;padding-top:1px;background:#eee;justify-content:flex-start;text-align:left;padding-left:5px;padding-right:3px;"><span class="lk">bgarcia8099</span></div>
<div class="cell" style="left:921px;top:275px;width:43px;height:40px;padding-top:1px;background:#eee;justify-content:center;text-align:center;;"><span class="lk">-</span></div>
<div class="cell" style="left:964px;top:275px;width:314px;height:40px;padding-top:3px;background:#eee;justify-content:flex-start;text-align:left;padding-left:5px;padding-right:3px;"><span class="lk">jmitchell5785: $34.50, dgarcia5310: $192.90,<br>dgarcia5310: $176.70, … (4)</span></div>
<div class="cell" style="left:1278px;top:275px;width:42px;height:40px;padding-top:1px;background:#eee;justify-content:flex-start;text-align:left;padding-left:5px;padding-right:3px;"><span class="lk">opera</span></div>
<div class="cell" style="left:1320px;top:275px;width:69px;height:40px;padding-top:2px;background:#eee;justify-content:flex-end;text-align:right;padding-right:10px;"><span class="act">Show</span></div>
<div class="hl" style="top:315px"></div>
<div class="cell" style="left:0px;top:316px;width:104px;height:40px;padding-top:3px;background:#eee;justify-content:flex-start;text-align:left;padding-left:5px;padding-right:3px;">01/05/2017<br>12:25 PM</div>
<div class="cell" style="left:104px;top:316px;width:45px;height:40px;padding-top:1px;background:#fff;justify-content:flex-start;text-align:left;padding-left:5px;padding-right:3px;"><span class="lk">1087</span></div>
<div class="cell" style="left:149px;top:316px;width:52px;height:40px;padding-top:1px;background:#fff;justify-content:flex-start;text-align:left;padding-left:5px;padding-right:3px;">Flores</div>
<div class="cell" style="left:201px;top:316px;width:31px;height:40px;padding-top:1px;background:#fff;justify-content:center;text-align:center;;"><span class="gr">-</span></div>
<div class="cell" style="left:232px;top:316px;width:37px;height:40px;padding-top:1px;background:#fff;justify-content:flex-start;text-align:left;padding-left:5px;padding-right:3px;">Mr.</div>
<div class="cell" style="left:269px;top:316px;width:60px;height:40px;padding-top:1px;background:#fff;justify-content:center;text-align:center;;"><span class="gr">-</span></div>
<div class="cell" style="left:329px;top:316px;width:51px;height:40px;padding-top:1px;background:#fff;justify-content:flex-start;text-align:left;padding-left:5px;padding-right:3px;">218071</div>
<div class="cell" style="left:380px;top:316px;width:38px;height:40px;padding-top:3px;background:#fff;justify-content:flex-start;text-align:left;padding-left:5px;padding-right:3px;"></div>
<div class="cell" style="left:418px;top:316px;width:75px;height:40px;padding-top:1px;background:#fff;justify-content:flex-start;text-align:left;padding-left:5px;padding-right:3px;">12/30/2016</div>
<div class="cell" style="left:493px;top:316px;width:75px;height:40px;padding-top:1px;background:#fff;justify-content:flex-start;text-align:left;padding-left:5px;padding-right:3px;">01/15/2017</div>
<div class="cell" style="left:568px;top:316px;width:98px;height:40px;padding-top:3px;background:#fff;justify-content:flex-start;text-align:left;padding-left:5px;padding-right:3px;">12/30/2016<br>12:00 AM</div>
<div class="cell" style="left:666px;top:316px;width:58px;height:40px;padding-top:1px;background:#fff;justify-content:center;text-align:center;;"><span class="gr">-</span></div>
<div class="cell" style="left:724px;top:316px;width:197px;height:40px;padding-top:1px;background:#fff;justify-content:center;text-align:center;;"><span class="lk">-</span></div>
<div class="cell" style="left:921px;top:316px;width:43px;height:40px;padding-top:1px;background:#fff;justify-content:center;text-align:center;;"><span class="lk">-</span></div>
<div class="cell" style="left:964px;top:316px;width:314px;height:40px;padding-top:3px;background:#fff;justify-content:flex-start;text-align:left;padding-left:5px;padding-right:3px;"><span class="lk">kwilson4199: $199.80, kroberts1842: $30.60,<br>bsanders959: $81.30, … (6)</span></div>
<div class="cell" style="left:1278px;top:316px;width:42px;height:40px;padding-top:1px;background:#fff;justify-content:flex-start;text-align:left;padding-left:5px;padding-right:3px;"><span class="lk">opera</span></div>
<div class="cell" style="left:1320px;top:316px;width:69px;height:40px;padding-top:2px;background:#fff;justify-content:flex-end;text-align:right;padding-right:10px;"><span class="act">Show</span></div>
<div class="hl" style="top:356px"></div>
<div class="cell" style="left:0px;top:357px;width:104px;height:40px;padding-top:3px;background:#ddd;justify-content:flex-start;text-align:left;padding-left:5px;padding-right:3px;">01/05/2017<br>12:25 PM</div>
<div class="cell" style="left:104px;top:357px;width:45px;height:40px;padding-top:1px;background:#eee;justify-content:flex-start;text-align:left;padding-left:5px;padding-right:3px;"><span class="lk">1609</span></div>
<div class="cell" style="left:149px;top:357px;width:52px;height:40px;padding-top:1px;background:#eee;justify-content:flex-start;text-align:left;padding-left:5px;padding-right:3px;">Yanez</div>
<div class="cell" style="left:201px;top:357px;width:31px;height:40px;padding-top:1px;background:#eee;justify-content:center;text-align:center;;"><span class="gr">-</span></div>
<div class="cell" style="left:232px;top:357px;width:37px;height:40px;padding-top:1px;background:#eee;justify-content:flex-start;text-align:left;padding-left:5px;padding-right:3px;">Miss.</div>
<div class="cell" style="left:269px;top:357px;width:60px;height:40px;padding-top:1px;background:#eee;justify-content:center;text-align:center;;"><span class="gr">-</span></div>
<div class="cell" style="left:329px;top:357px;width:51px;height:40px;padding-top:1px;background:#eee;justify-content:flex-start;text-align:left;padding-left:5px;padding-right:3px;">264975</div>
<div class="cell" style="left:380px;top:357px;width:38px;height:40px;padding-top:3px;background:#eee;justify-content:flex-start;text-align:left;padding-left:5px;padding-right:3px;"></div>
<div class="cell" style="left:418px;top:357px;width:75px;height:40px;padding-top:1px;background:#eee;justify-content:flex-start;text-align:left;padding-left:5px;padding-right:3px;">01/05/2017</div>
<div class="cell" style="left:493px;top:357px;width:75px;height:40px;padding-top:1px;background:#eee;justify-content:flex-start;text-align:left;padding-left:5px;padding-right:3px;">01/15/2017</div>
<div class="cell" style="left:568px;top:357px;width:98px;height:40px;padding-top:3px;background:#eee;justify-content:flex-start;text-align:left;padding-left:5px;padding-right:3px;">01/05/2017<br>12:00 AM</div>
<div class="cell" style="left:666px;top:357px;width:58px;height:40px;padding-top:1px;background:#eee;justify-content:center;text-align:center;;"><span class="gr">-</span></div>
<div class="cell" style="left:724px;top:357px;width:197px;height:40px;padding-top:1px;background:#eee;justify-content:center;text-align:center;;"><span class="lk">-</span></div>
<div class="cell" style="left:921px;top:357px;width:43px;height:40px;padding-top:1px;background:#eee;justify-content:center;text-align:center;;"><span class="lk">-</span></div>
<div class="cell" style="left:964px;top:357px;width:314px;height:40px;padding-top:3px;background:#eee;justify-content:flex-start;text-align:left;padding-left:5px;padding-right:3px;"><span class="lk">16403263: $153.30, 39461341: $1.80, lmurphy1481:<br>$178.70, … (5)</span></div>
<div class="cell" style="left:1278px;top:357px;width:42px;height:40px;padding-top:1px;background:#eee;justify-content:flex-start;text-align:left;padding-left:5px;padding-right:3px;"><span class="lk">opera</span></div>
<div class="cell" style="left:1320px;top:357px;width:69px;height:40px;padding-top:2px;background:#eee;justify-content:flex-end;text-align:right;padding-right:10px;"><span class="act">Show</span></div>
<div class="hl" style="top:397px"></div>
<div class="cell" style="left:0px;top:398px;width:104px;height:40px;padding-top:3px;background:#eee;justify-content:flex-start;text-align:left;padding-left:5px;padding-right:3px;">01/05/2017<br>12:25 PM</div>
<div class="cell" style="left:104px;top:398px;width:45px;height:40px;padding-top:1px;background:#fff;justify-content:flex-start;text-align:left;padding-left:5px;padding-right:3px;"><span class="lk">884</span></div>
<div class="cell" style="left:149px;top:398px;width:52px;height:40px;padding-top:1px;background:#fff;justify-content:flex-start;text-align:left;padding-left:5px;padding-right:3px;">Chang</div>
<div class="cell" style="left:201px;top:398px;width:31px;height:40px;padding-top:1px;background:#fff;justify-content:center;text-align:center;;"><span class="gr">-</span></div>
<div class="cell" style="left:232px;top:398px;width:37px;height:40px;padding-top:1px;background:#fff;justify-content:flex-start;text-align:left;padding-left:5px;padding-right:3px;">Dr.</div>
<div class="cell" style="left:269px;top:398px;width:60px;height:40px;padding-top:1px;background:#fff;justify-content:center;text-align:center;;"><span class="gr">-</span></div>
<div class="cell" style="left:329px;top:398px;width:51px;height:40px;padding-top:1px;background:#fff;justify-content:flex-start;text-align:left;padding-left:5px;padding-right:3px;">209197</div>
<div class="cell" style="left:380px;top:398px;width:38px;height:40px;padding-top:3px;background:#fff;justify-content:flex-start;text-align:left;padding-left:5px;padding-right:3px;"></div>
<div class="cell" style="left:418px;top:398px;width:75px;height:40px;padding-top:1px;background:#fff;justify-content:flex-start;text-align:left;padding-left:5px;padding-right:3px;">12/29/2016</div>
<div class="cell" style="left:493px;top:398px;width:75px;height:40px;padding-top:1px;background:#fff;justify-content:flex-start;text-align:left;padding-left:5px;padding-right:3px;">01/13/2017</div>
<div class="cell" style="left:568px;top:398px;width:98px;height:40px;padding-top:3px;background:#fff;justify-content:flex-start;text-align:left;padding-left:5px;padding-right:3px;">12/29/2016<br>12:00 AM</div>
<div class="cell" style="left:666px;top:398px;width:58px;height:40px;padding-top:1px;background:#fff;justify-content:center;text-align:center;;"><span class="gr">-</span></div>
<div class="cell" style="left:724px;top:398px;width:197px;height:40px;padding-top:3px;background:#fff;justify-content:flex-start;text-align:left;padding-left:5px;padding-right:3px;"><span class="lk">ayoung8389, mbutler9430,<br>apeterson4452</span></div>
<div class="cell" style="left:921px;top:398px;width:43px;height:40px;padding-top:1px;background:#fff;justify-content:center;text-align:center;;"><span class="lk">-</span></div>
<div class="cell" style="left:964px;top:398px;width:314px;height:40px;padding-top:3px;background:#fff;justify-content:flex-start;text-align:left;padding-left:5px;padding-right:3px;"><span class="lk">mbutler9430: $167.40, jmurphy9339: $109.80,<br>677171912392: $199.40, … (6)</span></div>
<div class="cell" style="left:1278px;top:398px;width:42px;height:40px;padding-top:1px;background:#fff;justify-content:flex-start;text-align:left;padding-left:5px;padding-right:3px;"><span class="lk">opera</span></div>
<div class="cell" style="left:1320px;top:398px;width:69px;height:40px;padding-top:2px;background:#fff;justify-content:flex-end;text-align:right;padding-right:10px;"><span class="act">Show</span></div>
<div class="hl" style="top:438px"></div>
<div class="hl" style="top:28px;background:#a0a0a0"></div>
<div class="vl" style="left:0px;top:28px;height:411px"></div>
<div class="vl" style="left:104px;top:28px;height:411px"></div>
<div class="vl" style="left:149px;top:28px;height:411px"></div>
<div class="vl" style="left:201px;top:28px;height:411px"></div>
<div class="vl" style="left:232px;top:28px;height:411px"></div>
<div class="vl" style="left:269px;top:28px;height:411px"></div>
<div class="vl" style="left:329px;top:28px;height:411px"></div>
<div class="vl" style="left:380px;top:28px;height:411px"></div>
<div class="vl" style="left:418px;top:28px;height:411px"></div>
<div class="vl" style="left:493px;top:28px;height:411px"></div>
<div class="vl" style="left:568px;top:28px;height:411px"></div>
<div class="vl" style="left:666px;top:28px;height:411px"></div>
<div class="vl" style="left:724px;top:28px;height:411px"></div>
<div class="vl" style="left:921px;top:28px;height:411px"></div>
<div class="vl" style="left:964px;top:28px;height:411px"></div>
<div class="vl" style="left:1278px;top:28px;height:411px"></div>
<div class="vl" style="left:1320px;top:28px;height:411px"></div>
<div class="vl" style="left:1389px;top:28px;height:411px"></div>
</div>
<div class="cb dis" style="left:429px;top:795px"></div>
<div class="cb dis" style="left:429px;top:836px"></div>
<div class="cb dis" style="left:429px;top:877px"></div>
<div class="cb dis" style="left:429px;top:918px"></div>
<div class="cb dis" style="left:429px;top:959px"></div>
<div class="cb dis" style="left:429px;top:1000px"></div>
<div class="cb dis" style="left:429px;top:1041px"></div>
<div class="cb dis" style="left:429px;top:1082px"></div>
<div class="cb dis" style="left:429px;top:1123px"></div>
<div class="cb dis" style="left:429px;top:1164px"></div>
<div class="a found" style="top:1201px">20 Found</div>
<div class="pg" style="left:1376px;top:1203px"><span style="color:#666">1</span> 2</div>
<div class="a" style="left:1396px;top:1203px;width:1px;height:14px;background:#ccc"></div>
<div class="pg" style="left:1402px;top:1203px">Next</div>
<div class="a h2" style="top:1232px">Guest Matches</div>
<div class="a" style="left:1027px;top:1231px;width:16px;height:16px"><svg width="16" height="16" viewBox="0 0 16 16"><path d="M1.5 8.5h13" stroke="#f4e64a" stroke-width="1.6"/><path d="M0 8.5l3.2-2.6v5.2z M16 8.5l-3.2-2.6v5.2z" fill="#f4e64a"/><path d="M8 4v9" stroke="#e8452c" stroke-width="2.2"/><path d="M8 0.3l-3.3 4.6h6.6z M8 16l-3.3-4.6h6.6z" fill="#e8452c"/></svg></div>
<div class="a tbt" style="left:1044px;top:1231px;letter-spacing:-0.15px">Zoom</div>
<div class="a helpq" style="left:1090px;top:1231px">?</div>
<div class="a tbt" style="left:1107px;top:1231px;letter-spacing:-1.0px">Help</div>
<div class="a" style="left:1143px;top:1231px;width:16px;height:16px"><svg width="16" height="16" viewBox="0 0 16 16"><g fill="#d6d6de"><circle cx="9" cy="8.5" r="5.8"/><rect x="7.7" y="0.6" width="2.6" height="15.4"/><rect x="1" y="7.2" width="16" height="2.6"/><rect x="7.7" y="0.6" width="2.6" height="15.4" transform="rotate(45 9 8.5)"/><rect x="7.7" y="0.6" width="2.6" height="15.4" transform="rotate(-45 9 8.5)"/></g><circle cx="9" cy="8.5" r="4.2" fill="#ececf2"/><circle cx="9.5" cy="9.5" r="1.8" fill="#fff"/><path d="M6 11.5C5 7.5 7.5 5 11.8 5.6" stroke="#74bd3c" stroke-width="3.2" fill="none"/><path d="M11 2.4L16.2 5.2 12.6 9.6z" fill="#86c94c"/></svg></div>
<div class="a tbt" style="left:1161px;top:1231px;letter-spacing:-1.15px">Batch</div>
<div class="a" style="left:1205px;top:1231px;width:16px;height:16px"><svg width="16" height="16" viewBox="0 0 16 16"><rect x="0.7" y="2.7" width="14.6" height="12.6" rx="1.6" fill="#ececec" stroke="#6a6a6a" stroke-width="1.4"/><rect x="2.2" y="11" width="11.6" height="3" fill="#c4c4c4"/><path d="M1 1.6C5 1.2 7.8 1.6 8 5.5" stroke="#3b78b6" stroke-width="2.6" fill="none"/><path d="M3.5 5.2h9l-4.5 4.6z" fill="#2f6aa6"/></svg></div>
<div class="a tbt" style="left:1221px;top:1231px;letter-spacing:-1.0px">Export</div>
<div class="a" style="left:1272px;top:1231px;width:16px;height:16px"><svg width="16" height="16" viewBox="0 0 16 16"><path d="M9.8 9.8l4.2 4.2" stroke="#b27a44" stroke-width="2.8" stroke-linecap="round"/><circle cx="6" cy="6" r="4.6" fill="#cfe2f6" stroke="#90aed0" stroke-width="1.3"/><circle cx="4.8" cy="4.8" r="2" fill="#fff" opacity=".75"/></svg></div>
<div class="a tbt" style="left:1289px;top:1231px;letter-spacing:-1.35px">Search</div>
<div class="a" style="left:1339px;top:1231px;width:16px;height:16px"><svg width="16" height="16" viewBox="0 0 16 16"><circle cx="8" cy="8" r="7.3" fill="#5aa84a" stroke="#4c9a3e" stroke-width=".8"/><circle cx="8" cy="8" r="5.8" fill="#8acb74"/><circle cx="8" cy="8" r="4.6" fill="#6dba58"/><path d="M8 4.6v6.8M4.6 8h6.8" stroke="#fff" stroke-width="2.3"/></svg></div>
<div class="a tbt" style="left:1356px;top:1231px;letter-spacing:-0.9px">Create New</div>
<div class="shd" style="top:1266px;height:36px"></div>
<div class="a tbl" style="top:1256px;height:46px">
<div class="hd" style="height:22px"></div>
<div class="a srt" style="left:55px;top:0;width:164px;height:22px"></div>
<div class="hc" style="left:60px;top:5px">Name</div>
<div class="hc" style="left:224px;top:5px">Guest Field</div>
<div class="hc" style="left:435px;top:5px">Pattern</div>
<div class="hc" style="left:574px;top:5px">Min transactions</div>
<div class="hc" style="left:869px;top:5px">Max transactions</div>
<div class="hc" style="left:1170px;top:5px">Usage Plans</div>
<div class="tri" style="left:204px;top:9px;border-bottom:6px solid #fff"></div>
<div class="cell" style="left:0px;top:22px;width:1389px;height:23px;padding-top:2px;background:#e9e9e9;justify-content:center;text-align:center;;"><span style="color:#555">No Entries</span></div>
<div class="hl" style="top:45px"></div>
<div class="hl" style="top:22px;background:#a0a0a0"></div>
<div class="vl" style="left:0px;top:22px;height:24px"></div>
<div class="vl" style="left:1389px;top:22px;height:24px"></div>
</div>
<div class="cbh" style="left:49px;top:1259px"></div>
<svg class="a" style="left:49px;top:1259px" width="12" height="12" viewBox="0 0 12 12"><path d="M2.5 6.2l2.5 2.6 4.8-6" stroke="#333" stroke-width="2" fill="none"/></svg>
<div class="a found" style="top:1310px">0 Found</div>
</body></html>
